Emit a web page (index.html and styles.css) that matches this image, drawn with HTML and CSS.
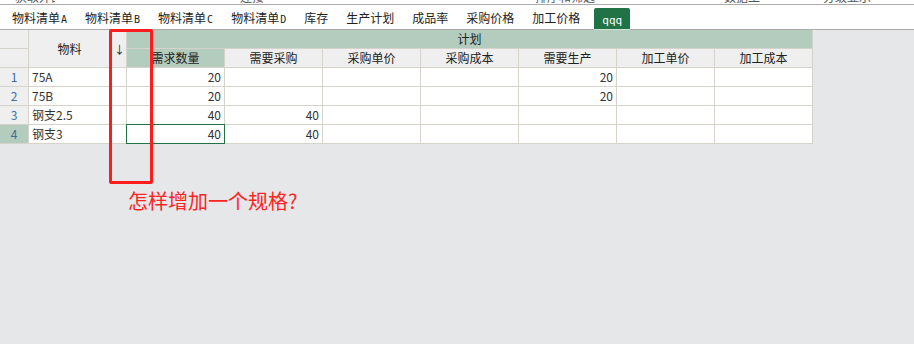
FILE: index.html
```html
<!DOCTYPE html>
<html lang="zh-CN">

<head>
    <meta charset="UTF-8">
    <title>物料计划</title>
    <link rel="stylesheet" href="styles.css">
</head>

<body>

    <!-- ribbon group labels, mostly scrolled out of view -->
    <div class="ribbon">
        <span class="group-label lbl-1">获取外部数据</span>
        <span class="group-label lbl-2">连接</span>
        <span class="group-label lbl-3">排序和筛选</span>
        <span class="group-label lbl-4">数据工具</span>
        <span class="group-label lbl-5">分级显示</span>
    </div>

    <div class="tabs">
        <div class="tab">物料清单<span class="latin">A</span></div>
        <div class="tab">物料清单<span class="latin">B</span></div>
        <div class="tab">物料清单<span class="latin">C</span></div>
        <div class="tab">物料清单<span class="latin">D</span></div>
        <div class="tab">库存</div>
        <div class="tab">生产计划</div>
        <div class="tab">成品率</div>
        <div class="tab">采购价格</div>
        <div class="tab">加工价格</div>
        <div class="tab active"><span class="latin">qqq</span></div>
    </div>

    <div class="sheet">
        <div class="grid">
            <!-- header row 1 -->
            <div class="cell corner"></div>
            <div class="cell head tall">物料</div>
            <div class="cell head tall arrow">↓</div>
            <div class="cell group">计划</div>

            <!-- header row 2 -->
            <div class="cell corner"></div>
            <div class="cell head sel">需求数量</div>
            <div class="cell head">需要采购</div>
            <div class="cell head">采购单价</div>
            <div class="cell head">采购成本</div>
            <div class="cell head">需要生产</div>
            <div class="cell head">加工单价</div>
            <div class="cell head">加工成本</div>

            <!-- row 1 -->
            <div class="cell rownum">1</div>
            <div class="cell text">75A</div>
            <div class="cell"></div>
            <div class="cell num">20</div>
            <div class="cell"></div>
            <div class="cell"></div>
            <div class="cell"></div>
            <div class="cell num">20</div>
            <div class="cell"></div>
            <div class="cell"></div>

            <!-- row 2 -->
            <div class="cell rownum">2</div>
            <div class="cell text">75B</div>
            <div class="cell"></div>
            <div class="cell num">20</div>
            <div class="cell"></div>
            <div class="cell"></div>
            <div class="cell"></div>
            <div class="cell num">20</div>
            <div class="cell"></div>
            <div class="cell"></div>

            <!-- row 3 -->
            <div class="cell rownum">3</div>
            <div class="cell text">钢支2.5</div>
            <div class="cell"></div>
            <div class="cell num">40</div>
            <div class="cell num">40</div>
            <div class="cell"></div>
            <div class="cell"></div>
            <div class="cell"></div>
            <div class="cell"></div>
            <div class="cell"></div>

            <!-- row 4 -->
            <div class="cell rownum current">4</div>
            <div class="cell text">钢支3</div>
            <div class="cell"></div>
            <div class="cell num active-cell">40</div>
            <div class="cell num">40</div>
            <div class="cell"></div>
            <div class="cell"></div>
            <div class="cell"></div>
            <div class="cell"></div>
            <div class="cell"></div>
        </div>

        <!-- annotation drawn over the sheet -->
        <div class="mark-box"></div>
        <div class="mark-text">怎样增加一个规格?</div>
    </div>

</body>

</html>
```

FILE: styles.css
```css
body {
    margin: 0;
    padding: 0;
    width: 914px;
    height: 344px;
    overflow: hidden;
    background-color: #e6e7e8;
    font-family: "Noto Sans CJK SC", "Liberation Sans", sans-serif;
    font-size: 12px;
    color: #333;
}

.ribbon {
    display: flex;
    height: 4px;
    overflow: hidden;
    background-color: #fff;
    border-bottom: 1px solid #ababab;
}

.group-label {
    display: block;
    line-height: 12px;
    margin-top: -9px;
    color: #555;
    white-space: nowrap;
}

.lbl-1 { margin-left: 15px; width: 40px; overflow: hidden; }
.lbl-2 { margin-left: 185px; }
.lbl-3 { margin-left: 271px; }
.lbl-4 { margin-left: 129px; width: 36px; overflow: hidden; }
.lbl-5 { margin-left: 63px; }

.tabs {
    display: flex;
    align-items: flex-end;
    height: 24px;
    padding-left: 3px;
    background-color: #fff;
    border-bottom: 1px solid #ababab;
}

.tab {
    height: 22px;
    line-height: 22px;
    padding: 0 9px;
    color: #222;
    white-space: nowrap;
}

.latin {
    font-family: "DejaVu Sans Mono", monospace;
    font-size: 10px;
    margin-left: 1px;
}

.tab.active {
    height: 21px;
    line-height: 21px;
    margin-left: 5px;
    padding: 0 8px;
    background-color: #217346;
    color: #fff;
    border-bottom: 1px solid #cfe2d6;
    border-radius: 2px 2px 0 0;
    position: relative;
    top: 1px;
}

.tab.active .latin {
    font-size: 11px;
    margin-left: 0;
}

.sheet {
    position: relative;
    height: 314px;
}

.grid {
    display: grid;
    grid-template-columns: 28px 81px 15px repeat(7, 97px);
    grid-auto-rows: 18px;
    gap: 1px;
    width: max-content;
    padding: 0 1px 1px 0;
    background-color: #d6d3cc;
}

.cell {
    background-color: #fff;
    line-height: 18px;
    white-space: nowrap;
    overflow: hidden;
}

.corner {
    background-color: #efefef;
}

.head {
    background-color: #efefef;
    text-align: center;
    color: #222;
}

.head.tall {
    grid-row: span 2;
    display: flex;
    align-items: center;
    justify-content: center;
}

.arrow {
    padding-left: 2px;
    font-size: 11px;
}

.group {
    grid-column: 4 / 11;
    background-color: #b3ccbe;
    text-align: center;
    color: #222;
}

.head.sel {
    background-color: #b3ccbe;
}

.rownum {
    background-color: #efefef;
    text-align: center;
    color: #3d6ea8;
}

.rownum.current {
    background-color: #b3ccbe;
    color: #3f6f96;
}

.text {
    padding-left: 3px;
}

.num {
    text-align: right;
    padding-right: 3px;
}

.active-cell {
    box-shadow: 0 0 0 1px #217346;
    position: relative;
}

.mark-box {
    position: absolute;
    left: 109px;
    top: -1px;
    width: 38px;
    height: 149px;
    border: 3px solid #ff1c1c;
    border-radius: 2px;
}

.mark-text {
    position: absolute;
    left: 128px;
    top: 159px;
    font-size: 20px;
    line-height: 24px;
    color: #ff2424;
    white-space: nowrap;
}
```
